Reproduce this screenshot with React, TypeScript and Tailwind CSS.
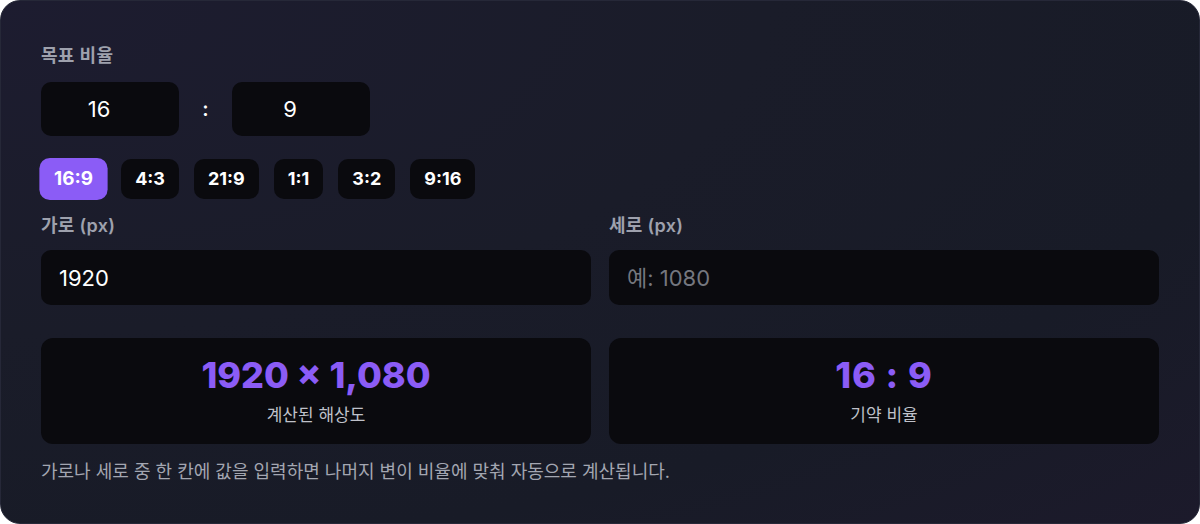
import React, { useState } from 'react';

const presets = ['16:9', '4:3', '21:9', '1:1', '3:2', '9:16'];

function gcd(a: number, b: number): number {
  return b === 0 ? a : gcd(b, a % b);
}

export default function App() {
  const [ratioW, setRatioW] = useState('16');
  const [ratioH, setRatioH] = useState('9');
  const [width, setWidth] = useState('1920');
  const [height, setHeight] = useState('');
  const [active, setActive] = useState('16:9');

  const rw = Number(ratioW) || 0;
  const rh = Number(ratioH) || 0;

  // fill whichever side is empty from the other one
  let outW = Number(width) || 0;
  let outH = Number(height) || 0;
  if (width && !height && rw) outH = Math.round((outW * rh) / rw);
  if (height && !width && rh) outW = Math.round((outH * rw) / rh);

  const g = rw && rh ? gcd(rw, rh) : 1;

  const pickPreset = (p: string) => {
    const [a, b] = p.split(':');
    setRatioW(a);
    setRatioH(b);
    setActive(p);
  };

  return (
    <div
      className="min-h-screen w-full text-white"
      style={{ fontFamily: 'Inter, "Noto Sans CJK KR", "Noto Sans", sans-serif' }}
    >
      <div className="h-[524px] rounded-[20px] border border-[#262838] bg-[radial-gradient(ellipse_at_top_left,#1d1c30_0%,#1a1c29_45%,#181b27_75%,#1c1a2b_100%)] px-10 pt-[43px]">
        <div className="text-lg font-semibold leading-6 tracking-[0.3px] text-[#9ea1ad]">목표 비율</div>

        <div className="mt-[14px] flex items-center">
          <input
            value={ratioW}
            onChange={(e) => { setRatioW(e.target.value); setActive(''); }}
            className="h-[54px] w-[138px] rounded-[10px] bg-[#0a0a0e] pr-[22px] text-center text-[22px] text-white outline-none"
          />
          <span className="w-[53px] text-center text-xl font-semibold">:</span>
          <input
            value={ratioH}
            onChange={(e) => { setRatioH(e.target.value); setActive(''); }}
            className="h-[54px] w-[138px] rounded-[10px] bg-[#0a0a0e] pr-[22px] text-center text-[22px] text-white outline-none"
          />
        </div>

        <div className="mt-[23px] flex gap-[15px]">
          {presets.map((p) => (
            <button
              key={p}
              onClick={() => pickPreset(p)}
              className={
                active === p
                  ? 'h-10 scale-105 rounded-[10px] bg-[#8b5cf6] px-[14px] text-lg font-bold text-white'
                  : 'h-10 rounded-[10px] bg-[#0a0a0e] px-[14px] text-lg font-bold text-white'
              }
            >
              {p}
            </button>
          ))}
        </div>

        <div className="mt-[15px] grid grid-cols-2 gap-[18px]">
          <label className="block">
            <span className="block text-lg font-semibold leading-6 tracking-[0.3px] text-[#9ea1ad]">가로 (px)</span>
            <input
              value={width}
              onChange={(e) => setWidth(e.target.value)}
              className="mt-3 h-[55px] w-full rounded-[10px] bg-[#0a0a0e] px-[18px] text-[22px] text-white outline-none placeholder:text-[#75777f]"
              placeholder="예: 1920"
            />
          </label>
          <label className="block">
            <span className="block text-lg font-semibold leading-6 tracking-[0.3px] text-[#9ea1ad]">세로 (px)</span>
            <input
              value={height}
              onChange={(e) => setHeight(e.target.value)}
              className="mt-3 h-[55px] w-full rounded-[10px] bg-[#0a0a0e] px-[18px] text-[22px] text-white outline-none placeholder:text-[#75777f]"
              placeholder="예: 1080"
            />
          </label>
        </div>

        <div className="mt-[33px] grid grid-cols-2 gap-[18px]">
          <div className="flex h-[106px] flex-col items-center justify-center rounded-[12px] bg-[#0a0a0e]">
            <div className="text-[36px] font-extrabold leading-10 text-[#8b5cf6]">
              {outW} × {outH.toLocaleString()}
            </div>
            <div className="mt-2 text-[17px] leading-6 text-[#bfc1c9]">계산된 해상도</div>
          </div>
          <div className="flex h-[106px] flex-col items-center justify-center rounded-[12px] bg-[#0a0a0e]">
            <div className="text-[36px] font-extrabold leading-10 tracking-wide text-[#8b5cf6]">
              {rw / g} : {rh / g}
            </div>
            <div className="mt-2 text-[17px] leading-6 text-[#bfc1c9]">기약 비율</div>
          </div>
        </div>

        <p className="mt-4 text-lg leading-6 text-[#a3a6b1]">
          가로나 세로 중 한 칸에 값을 입력하면 나머지 변이 비율에 맞춰 자동으로 계산됩니다.
        </p>
      </div>
    </div>
  );
}
